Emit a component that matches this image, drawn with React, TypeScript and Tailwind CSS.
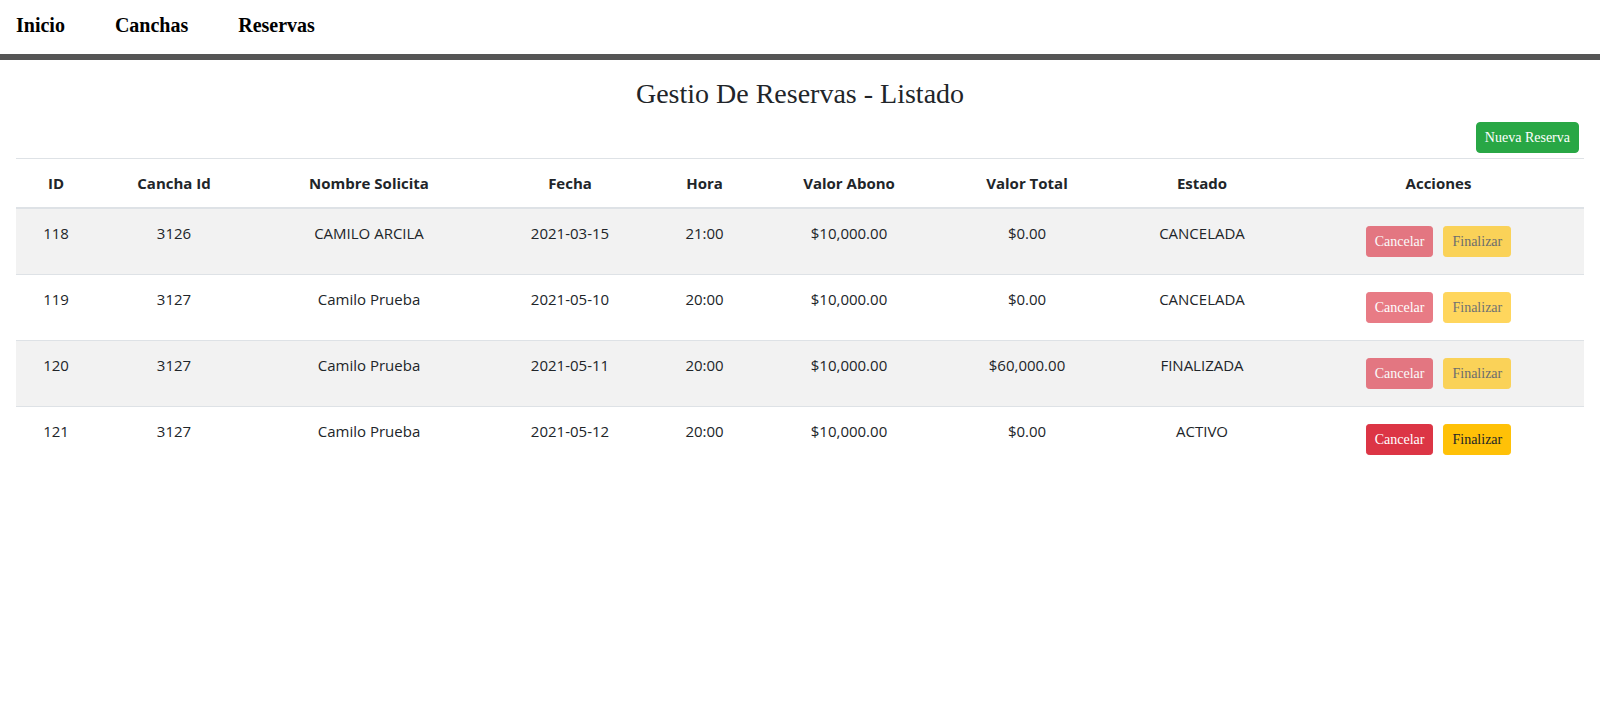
const reservas = [
  { id: 118, cancha: 3126, nombre: "CAMILO ARCILA", fecha: "2021-03-15", hora: "21:00", abono: "$10,000.00", total: "$0.00", estado: "CANCELADA" },
  { id: 119, cancha: 3127, nombre: "Camilo Prueba", fecha: "2021-05-10", hora: "20:00", abono: "$10,000.00", total: "$0.00", estado: "CANCELADA" },
  { id: 120, cancha: 3127, nombre: "Camilo Prueba", fecha: "2021-05-11", hora: "20:00", abono: "$10,000.00", total: "$60,000.00", estado: "FINALIZADA" },
  { id: 121, cancha: 3127, nombre: "Camilo Prueba", fecha: "2021-05-12", hora: "20:00", abono: "$10,000.00", total: "$0.00", estado: "ACTIVO" },
];

const headers = ["ID", "Cancha Id", "Nombre Solicita", "Fecha", "Hora", "Valor Abono", "Valor Total", "Estado", "Acciones"];

const App = () => {
  return (
    <div className="min-h-screen bg-white text-[#212529] font-['Open_Sans',sans-serif]">
      {/* Navbar */}
      <nav className="h-[60px] border-b-[6px] border-[#555555]">
        <ul className="flex gap-[50px] pl-4 pt-[14px] font-['Liberation_Serif',serif] font-bold text-[20px] leading-[22px] text-black">
          <li>Inicio</li>
          <li>Canchas</li>
          <li>Reservas</li>
        </ul>
      </nav>

      <main className="px-4">
        <h1 className="mt-[18px] text-center font-['Liberation_Serif',serif] text-[28px] leading-[32px]">
          Gestio De Reservas - Listado
        </h1>

        <div className="mt-[7px] flex justify-end">
          <button className="m-[5px] rounded-[4px] border border-[#28a745] bg-[#28a745] px-2 py-1 font-['Liberation_Serif',serif] text-[14px] leading-[21px] text-white">
            Nueva Reserva
          </button>
        </div>

        {/* Tabla */}
        <table className="w-full table-fixed border-collapse text-[15px] leading-[24px]">
          <colgroup>
            <col className="w-[80px]" />
            <col className="w-[156px]" />
            <col className="w-[234px]" />
            <col className="w-[168px]" />
            <col className="w-[101px]" />
            <col className="w-[188px]" />
            <col className="w-[168px]" />
            <col className="w-[182px]" />
            <col className="w-[291px]" />
          </colgroup>
          <thead>
            <tr>
              {headers.map((h) => (
                <th
                  key={h}
                  className="border-t border-b-2 border-[#dee2e6] p-3 text-center align-bottom font-bold"
                >
                  {h}
                </th>
              ))}
            </tr>
          </thead>
          <tbody>
            {reservas.map((r, i) => (
              <Row key={r.id} r={r} striped={i % 2 === 0} />
            ))}
          </tbody>
        </table>
      </main>
    </div>
  );
};

interface Reserva {
  id: number;
  cancha: number;
  nombre: string;
  fecha: string;
  hora: string;
  abono: string;
  total: string;
  estado: string;
}

const Row = ({ r, striped }: { r: Reserva; striped: boolean }) => {
  const disabled = r.estado !== "ACTIVO";
  const cells = [r.id, r.cancha, r.nombre, r.fecha, r.hora, r.abono, r.total, r.estado];
  return (
    <tr className={striped ? "bg-[#f2f2f2]" : "bg-white"}>
      {cells.map((c, idx) => (
        <td key={idx} className="border-t border-[#dee2e6] p-3 text-center align-top">
          {c}
        </td>
      ))}
      <td className="border-t border-[#dee2e6] p-3 align-top">
        <div className="flex justify-center">
          <button
            className={`m-[5px] rounded-[3.2px] border border-[#dc3545] bg-[#dc3545] px-2 py-1 font-['Liberation_Serif',serif] text-[14px] leading-[21px] text-white ${
              disabled ? "opacity-65" : ""
            }`}
          >
            Cancelar
          </button>
          <button
            className={`m-[5px] rounded-[3.2px] border border-[#ffc107] bg-[#ffc107] px-2 py-1 font-['Liberation_Serif',serif] text-[14px] leading-[21px] text-[#212529] ${
              disabled ? "opacity-65" : ""
            }`}
          >
            Finalizar
          </button>
        </div>
      </td>
    </tr>
  );
};

export default App;
